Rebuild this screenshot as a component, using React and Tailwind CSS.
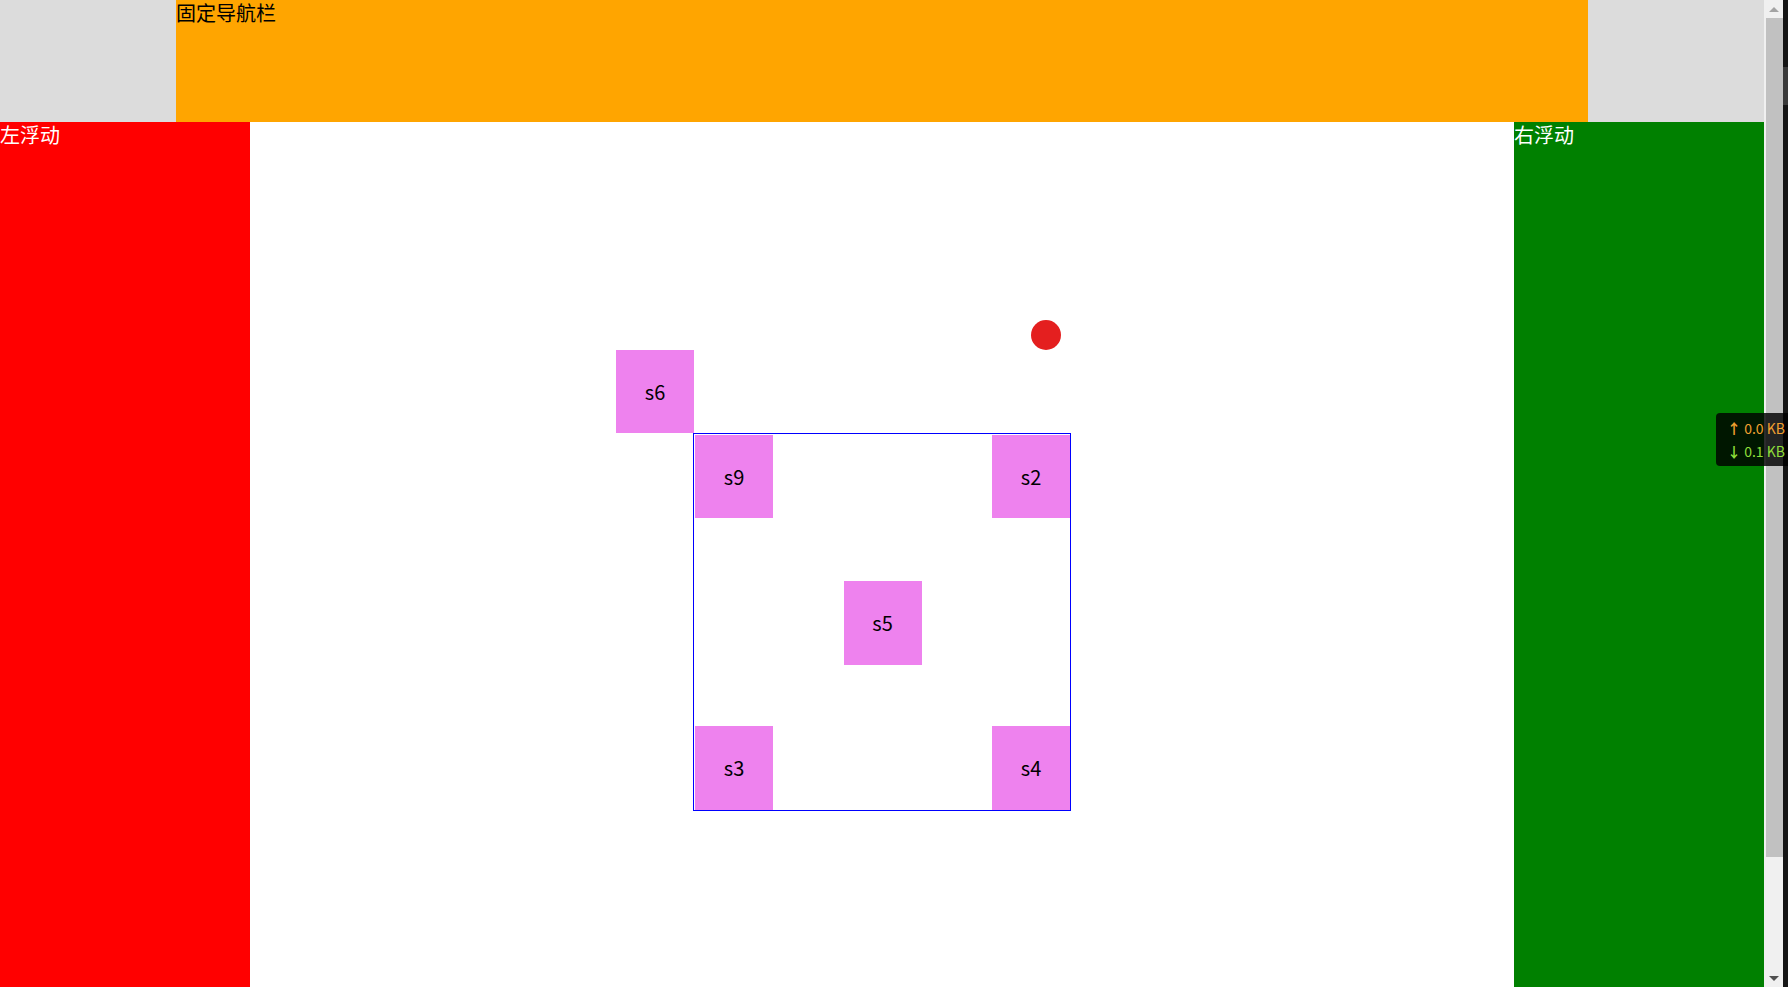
import React from 'react';

const font = { fontFamily: '"Noto Sans CJK SC", "Microsoft YaHei", sans-serif' };

const Box = ({ label, className = '' }) => (
  <div className={`w-[78px] h-[83px] bg-[#ee82ee] flex items-center justify-center text-[20px] text-black ${className}`}>
    {label}
  </div>
);

const App = () => {
  return (
    <div className="w-[1788px] h-[987px] overflow-hidden flex bg-white relative" style={font}>
      <div className="w-[1764px] h-full flex flex-col">
        {/* header */}
        <div className="h-[122px] bg-[#dcdcdc] flex justify-center shrink-0">
          <div className="w-[1412px] h-full bg-[#ffa500] text-[20px] leading-[26px] text-black">
            固定导航栏
          </div>
        </div>

        {/* body */}
        <div className="flex flex-1 min-h-0">
          <div className="w-[250px] bg-[#ff0000] text-white text-[20px] leading-[26px]">左浮动</div>

          <div className="flex-1 flex justify-center pt-[311px]">
            <div className="relative w-[378px] h-[378px] border border-[#0000ff]">
              <Box label="s6" className="absolute left-[-78px] top-[-84px]" />
              <div className="absolute left-[337px] top-[-114px] w-[30px] h-[30px] rounded-full bg-[#e41f1f]" />

              <div className="w-full h-full grid grid-cols-[78px_1fr_78px] grid-rows-[84px_1fr_84px] pl-px pt-px">
                <Box label="s9" />
                <div />
                <Box label="s2" />
                <div />
                <Box label="s5" className="place-self-center h-[84px]" />
                <div />
                <Box label="s3" className="self-end h-[84px]" />
                <div />
                <Box label="s4" className="self-end h-[84px]" />
              </div>
            </div>
          </div>

          <div className="w-[250px] bg-[#008000] text-white text-[20px] leading-[26px]">右浮动</div>
        </div>
      </div>

      {/* scrollbar */}
      <div className="w-[19px] h-full bg-[#f0f0f0] flex flex-col">
        <div className="h-[18px] flex items-center justify-center">
          <div className="w-0 h-0 border-l-[5px] border-r-[5px] border-b-[5px] border-l-transparent border-r-transparent border-b-[#a3a3a3]" />
        </div>
        <div className="h-[839px] ml-[2px] bg-[#c1c1c1]" />
        <div className="flex-1" />
        <div className="h-[18px] flex items-center justify-center">
          <div className="w-0 h-0 border-l-[5px] border-r-[5px] border-t-[5px] border-l-transparent border-r-transparent border-t-[#505050]" />
        </div>
      </div>
      <div className="w-[5px] h-full bg-[#151515] flex flex-col">
        <div className="h-[67px]" />
        <div className="h-[38px] bg-[#3a3a3a]" />
      </div>

      {/* network speed overlay */}
      <div className="absolute left-[1716px] top-[413px] w-[100px] h-[53px] rounded-[4px] bg-[rgba(0,0,0,0.82)] pl-[11px] flex flex-col justify-center text-[14px] leading-[23px]">
        <div className="text-[#f0a030] whitespace-nowrap"><span className="font-bold">↑</span> 0.0 KB</div>
        <div className="text-[#8fdf3a] whitespace-nowrap"><span className="font-bold">↓</span> 0.1 KB</div>
      </div>
    </div>
  );
};

export default App;
